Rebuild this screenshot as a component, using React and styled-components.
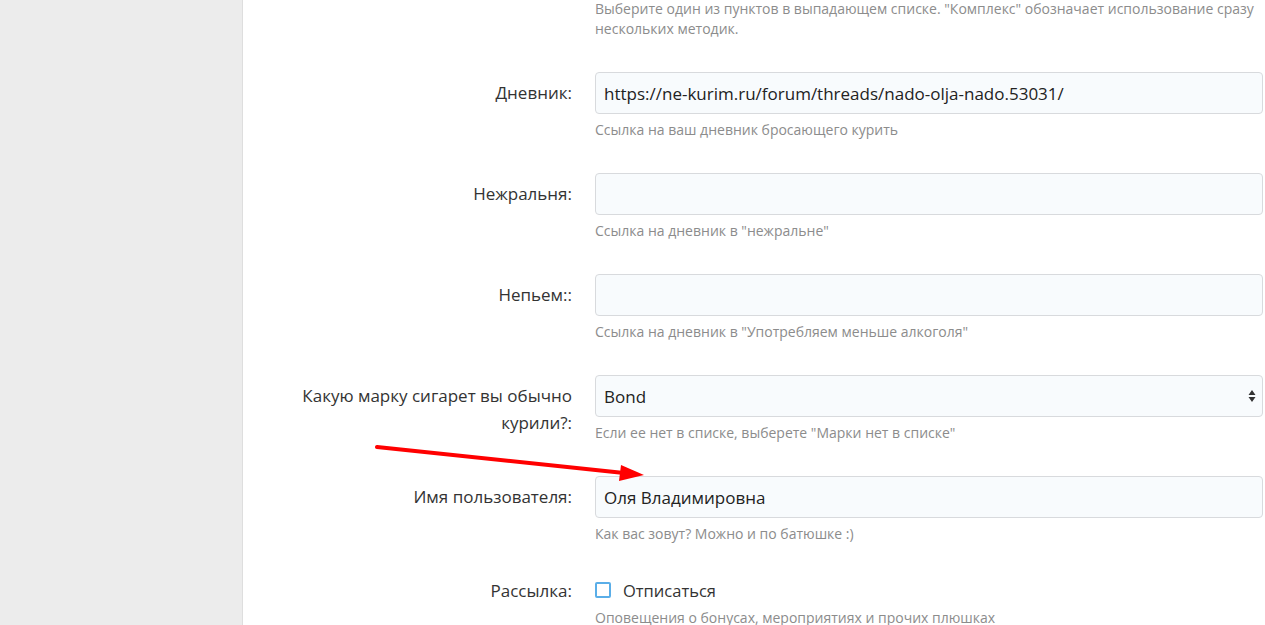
import styled, { createGlobalStyle } from 'styled-components'

const GlobalStyle = createGlobalStyle`
  html, body {
    margin: 0;
    padding: 0;
    background: #fff;
  }
  body {
    font-family: "Open Sans", "Noto Sans", "Liberation Sans", sans-serif;
    overflow: hidden;
  }
`

const Page = styled.div`
  display: flex;
  width: 1265px;
  height: 625px;
  overflow: hidden;
  position: relative;
`
const Side = styled.div`
  width: 242px;
  flex: none;
  background: #ececec;
  border-right: 1px solid #dedede;
`
const Main = styled.div`
  flex: 1;
  padding: 0 2px 0 0;
  margin-top: -1px;
`
const Form = styled.div`
  display: grid;
  grid-template-columns: 329px 1fr;
  column-gap: 23px;
  row-gap: 33px;
  align-items: start;
`
const Label = styled.div`
  text-align: right;
  font-size: 17px;
  line-height: 27px;
  color: #333;
  padding-left: 50px;
  padding-top: ${p => p.$top ?? 7}px;
`
const Field = styled.div`
  display: flex;
  flex-direction: column;
`
const Input = styled.input`
  box-sizing: border-box;
  height: 42px;
  width: 100%;
  border: 1px solid #d8dadd;
  border-radius: 4px;
  background: #f8fbfd;
  padding: 0 8px;
  font: inherit;
  font-size: 17px;
  color: #222;
  outline: none;
`
const Select = styled.div`
  box-sizing: border-box;
  height: 42px;
  border: 1px solid #d8dadd;
  border-radius: 4px;
  background: #f8fbfd;
  padding: 0 6px 0 8px;
  font-size: 17px;
  color: #222;
  display: flex;
  align-items: center;
  justify-content: space-between;
`
const Hint = styled.div`
  margin-top: ${p => p.$mt ?? 6}px;
  font-size: 14px;
  line-height: 20px;
  color: #8c8c8c;
`
const Check = styled.label`
  display: flex;
  align-items: center;
  gap: 12px;
  height: 26px;
  font-size: 16.5px;
  color: #333;
`
const Box = styled.span`
  box-sizing: border-box;
  width: 16px;
  height: 16px;
  border: 2px solid #5aaee8;
  border-radius: 2px;
  background: #fff;
`
const Arrow = styled.svg`
  position: absolute;
  left: 0;
  top: 0;
  pointer-events: none;
`

const rows = [
  { label: 'Дневник:', value: 'https://ne-kurim.ru/forum/threads/nado-olja-nado.53031/', hint: 'Ссылка на ваш дневник бросающего курить' },
  { label: 'Нежральня:', value: '', hint: 'Ссылка на дневник в "нежральне"' },
  { label: 'Непьем::', value: '', hint: 'Ссылка на дневник в "Употребляем меньше алкоголя"' },
]

const App = () => {
  return (
    <Page>
      <GlobalStyle />
      <Side />
      <Main>
        <Form>
          <div />
          <Hint $mt={0}>
            Выберите один из пунктов в выпадающем списке. "Комплекс" обозначает использование сразу нескольких методик.
          </Hint>
          {rows.map(r => (
            <>
              <Label key={r.label + 'l'}>{r.label}</Label>
              <Field key={r.label + 'f'}>
                <Input defaultValue={r.value} readOnly />
                <Hint>{r.hint}</Hint>
              </Field>
            </>
          ))}
          <Label>Какую марку сигарет вы обычно курили?:</Label>
          <Field>
            <Select>
              <span>Bond</span>
              <svg width="8" height="14" viewBox="0 0 8 14">
                <path d="M4 1 L7.5 6 L0.5 6 Z M4 13 L7.5 8 L0.5 8 Z" fill="#333" />
              </svg>
            </Select>
            <Hint>Если ее нет в списке, выберете "Марки нет в списке"</Hint>
          </Field>
          <Label>Имя пользователя:</Label>
          <Field>
            <Input defaultValue="Оля Владимировна" readOnly />
            <Hint>Как вас зовут? Можно и по батюшке :)</Hint>
          </Field>
          <Label $top={0}>Рассылка:</Label>
          <Field>
            <Check>
              <Box />
              Отписаться
            </Check>
            <Hint $mt={5}>Оповещения о бонусах, мероприятиях и прочих плюшках</Hint>
          </Field>
        </Form>
      </Main>
      <Arrow width="1265" height="625" viewBox="0 0 1265 625">
        <line x1="377" y1="447" x2="624" y2="473" stroke="#f00" strokeWidth="4" strokeLinecap="round" />
        <path d="M644 475 L621 465 L619 481 Z" fill="#f00" />
      </Arrow>
    </Page>
  )
}

export default App
